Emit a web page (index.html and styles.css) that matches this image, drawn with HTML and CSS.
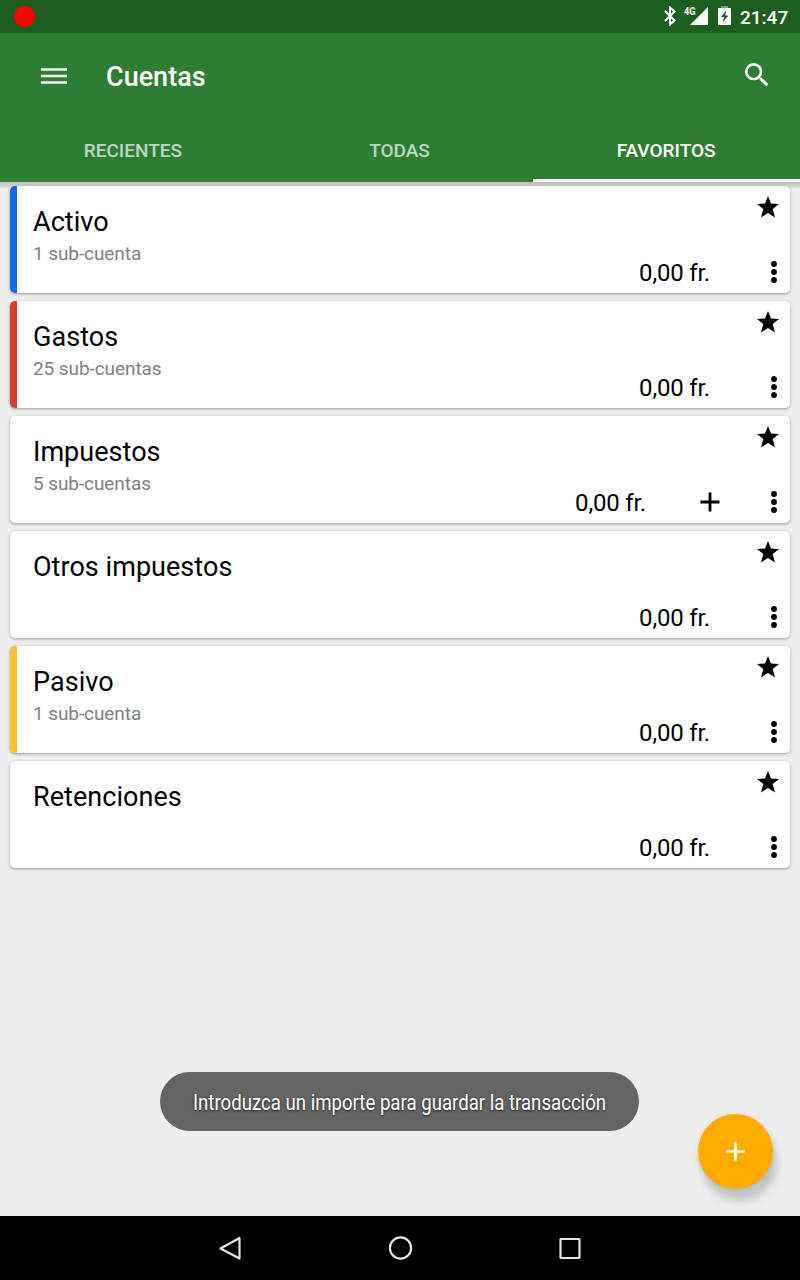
FILE: index.html
```html
<!DOCTYPE html>
<html lang="es">
<head>
<meta charset="utf-8">
<title>Cuentas</title>
<link rel="stylesheet" href="styles.css">
</head>
<body>
<svg class="defs" aria-hidden="true">
  <symbol id="star" viewBox="0 0 22 22"><path d="M11 0l3 7.500 8 .4-6.300 5.100 2.300 8.500L11 17l-7 4.500 2.300-8.500L0 7.900l8-.4z"/></symbol>
  <symbol id="more" viewBox="0 0 8 24"><circle cx="4" cy="4" r="2.900"/><circle cx="4" cy="12" r="2.900"/><circle cx="4" cy="20" r="2.900"/></symbol>
  <symbol id="plus" viewBox="0 0 20 20"><path d="M10 .5v19M.5 10h19" fill="none" stroke="currentColor" stroke-width="2.800"/></symbol>
</svg>
<div class="screen">
  <header class="header">
    <div class="status">
      <span class="record"></span>
      <div class="status-icons">
        <svg class="bluetooth" viewBox="0 0 12 20"><path d="M1 5l9.500 9.500L6 18.500v-17l4.500 4L1 15" fill="none" stroke="#fff" stroke-width="2"/></svg>
        <div class="signal"><span class="network">4G</span><svg viewBox="0 0 18 18"><path d="M18 0v18H0z" fill="#fff"/></svg></div>
        <svg class="battery" viewBox="0 0 13 19"><path d="M3 0h7v2H3z" fill="#fff" opacity=".4"/><path d="M0 2h13v17H0z" fill="#fff"/><path d="M8.500 4.300L3 11h3.200L4.500 16.500l6-7H7.300z" fill="#1b5e20"/></svg>
        <span class="clock">21:47</span>
      </div>
    </div>
    <div class="toolbar">
      <svg class="menu" viewBox="0 0 26 18"><path d="M0 2.500h26M0 9h26M0 15.500h26" stroke="#fff" stroke-width="2.700"/></svg>
      <h1 class="title">Cuentas</h1>
      <svg class="search" viewBox="0 0 24 24"><path fill="#fff" d="M15.500 14h-.79l-.28-.27A6.471 6.471 0 0 0 16 9.500 6.500 6.500 0 1 0 9.500 16c1.610 0 3.090-.59 4.230-1.570l.27.28v.79l5 4.990L20.490 19l-4.990-5zm-6 0C7.010 14 5 11.990 5 9.500S7.010 5 9.500 5 14 7.010 14 9.500 11.990 14 9.500 14z"/></svg>
    </div>
    <nav class="tabs">
      <span class="tab">RECIENTES</span>
      <span class="tab">TODAS</span>
      <span class="tab tab-active">FAVORITOS</span>
    </nav>
  </header>
  <main class="accounts">
    <article class="card blue">
      <div class="info"><h2 class="name">Activo</h2><p class="sub">1 sub-cuenta</p></div>
      <svg class="star"><use href="#star"/></svg>
      <div class="actions"><span class="amount">0,00 fr.</span><svg class="more"><use href="#more"/></svg></div>
    </article>
    <article class="card red">
      <div class="info"><h2 class="name">Gastos</h2><p class="sub">25 sub-cuentas</p></div>
      <svg class="star"><use href="#star"/></svg>
      <div class="actions"><span class="amount">0,00 fr.</span><svg class="more"><use href="#more"/></svg></div>
    </article>
    <article class="card">
      <div class="info"><h2 class="name">Impuestos</h2><p class="sub">5 sub-cuentas</p></div>
      <svg class="star"><use href="#star"/></svg>
      <div class="actions"><span class="amount amount-add">0,00 fr.</span><svg class="add"><use href="#plus"/></svg><svg class="more"><use href="#more"/></svg></div>
    </article>
    <article class="card">
      <div class="info"><h2 class="name">Otros impuestos</h2></div>
      <svg class="star"><use href="#star"/></svg>
      <div class="actions"><span class="amount">0,00 fr.</span><svg class="more"><use href="#more"/></svg></div>
    </article>
    <article class="card yellow">
      <div class="info"><h2 class="name">Pasivo</h2><p class="sub">1 sub-cuenta</p></div>
      <svg class="star"><use href="#star"/></svg>
      <div class="actions"><span class="amount">0,00 fr.</span><svg class="more"><use href="#more"/></svg></div>
    </article>
    <article class="card">
      <div class="info"><h2 class="name">Retenciones</h2></div>
      <svg class="star"><use href="#star"/></svg>
      <div class="actions"><span class="amount">0,00 fr.</span><svg class="more"><use href="#more"/></svg></div>
    </article>
  </main>
  <div class="toast"><span class="toast-text">Introduzca un importe para guardar la transacción</span></div>
  <div class="fab"><svg viewBox="0 0 19 19"><path d="M9.500 0v19M0 9.500h19" fill="none" stroke="#fff" stroke-width="2.700"/></svg></div>
  <footer class="navbar">
    <svg viewBox="0 0 26 26"><path d="M3.500 13.500L22.500 3v20.500z"/></svg>
    <svg viewBox="0 0 26 26"><circle cx="13.500" cy="13" r="10.600"/></svg>
    <svg viewBox="0 0 26 26"><rect x="3.500" y="4" width="19" height="19" rx=".5"/></svg>
  </footer>
</div>
</body>
</html>
```
FILE: styles.css
```css
* { box-sizing: border-box; }
body { margin: 0; font-family: Roboto, "Liberation Sans", sans-serif; }
h1, h2, p { margin: 0; font-weight: 400; }
svg { display: block; flex: none; }
.defs { display: none; }
.screen { position: relative; display: flex; flex-direction: column; width: 800px; height: 1280px; overflow: hidden; background: #eee; color: #000; }

.header { position: relative; z-index: 1; flex: none; height: 182px; background: #2e7d32; color: #fff; }
.status { display: flex; justify-content: space-between; height: 33px; padding: 6px 11px 0 13.500px; background: #1b5e20; }
.record { width: 21px; height: 21px; border-radius: 50%; background: #f00; }
.status-icons { display: flex; }
.bluetooth { width: 12px; height: 20px; margin-right: 8px; }
.signal { display: flex; position: relative; width: 24px; justify-content: flex-end; padding-top: 1px; margin-right: 10px; }
.signal svg { width: 18px; height: 18px; }
.network { position: absolute; left: 0; top: 0; font-size: 11px; line-height: 12px; font-weight: 700; transform: scaleX(.84); transform-origin: left; }
.battery { width: 13px; height: 19px; margin-right: 9px; }
.clock { width: 49px; font-size: 19px; line-height: 23px; font-weight: 500; white-space: nowrap; }
.toolbar { display: flex; align-items: center; height: 85px; padding: 0 27px 0 41px; }
.menu { width: 26px; height: 18px; }
.title { flex: 1; margin-left: 39px; padding-top: 2px; font-size: 27px; line-height: 32px; font-weight: 500; }
.search { width: 32px; height: 32px; margin-top: -1px; }
.tabs { display: grid; grid-template-columns: 1fr 1fr 1fr; height: 64px; }
.tab { display: flex; align-items: center; justify-content: center; border-bottom: 3px solid transparent; padding: 3px 1px 0 0; font-size: 19px; font-weight: 500; color: rgba(255,255,255,.7); }
.tab-active { color: #fff; border-color: #fff; }

.accounts { display: flex; flex: 1; flex-direction: column; gap: 8px; padding: 4px 10px 0; background: linear-gradient(#bdbdbd, #d0d0d0 4px, #eee 7px); }
.card { display: grid; grid-template-columns: 1fr auto; grid-template-rows: 64px 43px; height: 107px; border-radius: 5px; overflow: hidden; background: #fff; box-shadow: 0 1px 3px rgba(0,0,0,.38); }
.blue { background: linear-gradient(to right, #1469eb 7px, #fff 7px); }
.red { background: linear-gradient(to right, #d43e2a 7px, #fff 7px); }
.yellow { background: linear-gradient(to right, #fbc02d 7px, #fff 7px); }
.info { padding: 20px 0 0 23px; }
.name { font-size: 27px; line-height: 32px; letter-spacing: .04px; }
.sub { margin-top: 4px; font-size: 19px; line-height: 24px; letter-spacing: -.08px; color: #808080; }
.star { width: 22px; height: 22px; margin: 10px 11px 0 0; }
.actions { grid-column: 1 / 3; display: flex; align-items: center; justify-content: flex-end; padding: 1px 12px 0 0; }
.amount { margin-right: 60px; padding-top: 2px; font-size: 24px; line-height: 28px; letter-spacing: -.2px; }
.amount-add { margin-right: 54px; }
.add { width: 20px; height: 20px; margin-right: 50px; }
.more { width: 8px; height: 24px; }

.toast { position: absolute; left: 160px; top: 1072px; width: 479px; height: 59px; border-radius: 30px; background: #646464; color: #fff; }
.toast-text { position: absolute; left: 33px; top: 18px; font-size: 21.300px; line-height: 26px; white-space: nowrap; transform: scaleX(.874); transform-origin: left; text-shadow: 0 1px 3px rgba(0,0,0,.7); }
.fab { position: absolute; left: 698px; top: 1114px; display: grid; place-items: center; width: 75px; height: 75px; border-radius: 50%; background: #ffab00; box-shadow: 4px 12px 10px rgba(0,0,0,.18), 0 0 5px rgba(0,0,0,.1); }
.fab svg { width: 19px; height: 19px; }
.navbar { position: relative; display: flex; justify-content: center; gap: 144px; height: 64px; padding-top: 19px; background: #000; }
.navbar svg { width: 26px; height: 26px; fill: none; stroke: #e6e6e6; stroke-width: 2.200; stroke-linejoin: round; }
```
